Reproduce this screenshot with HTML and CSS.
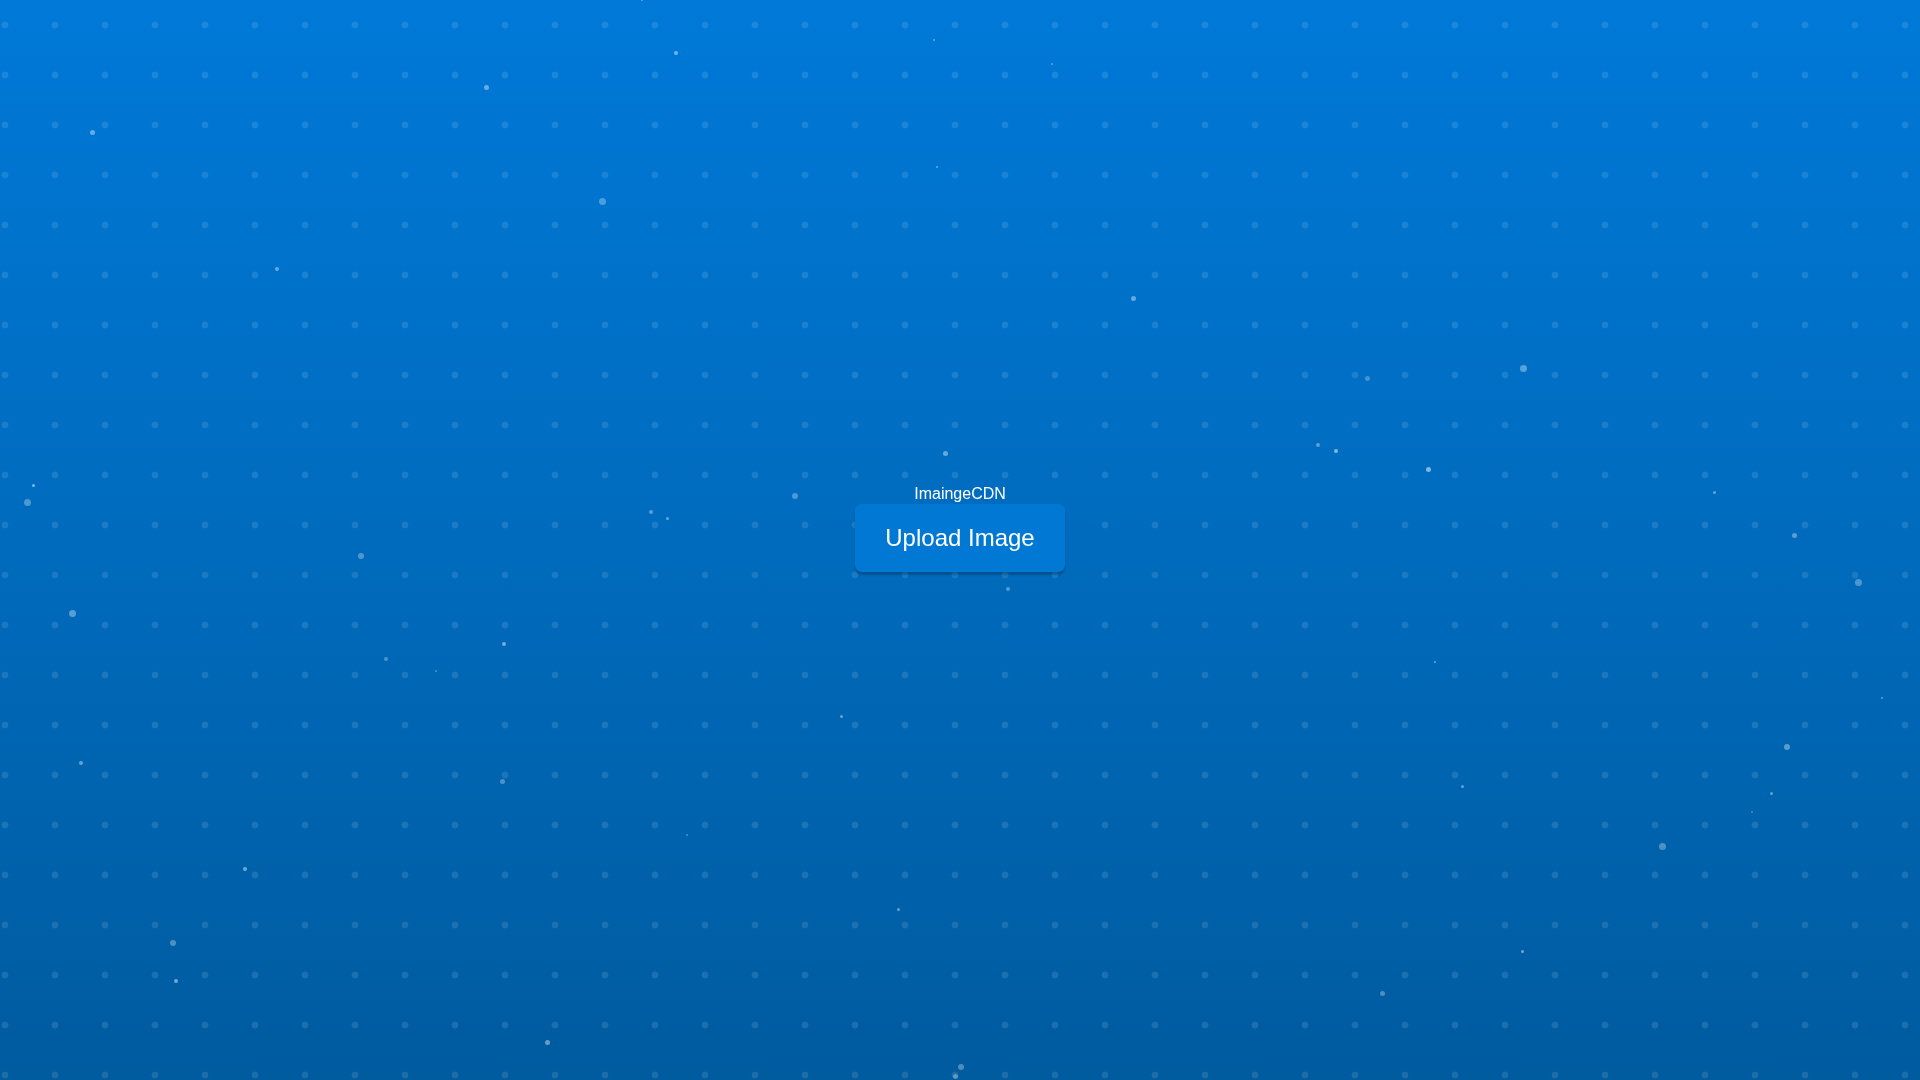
FILE: index.html
```html
<!DOCTYPE html>
<html lang="en">
<head>
<meta charset="utf-8">
<title>ImaingeCDN</title>
<link rel="stylesheet" href="styles.css">
</head>
<body>
<div class="particles">
  <span class="p" style="--x:642px;--y:0px;--s:2px;--o:.4"></span>
  <span class="p" style="--x:676px;--y:53px;--s:4px;--o:.45"></span>
  <span class="p" style="--x:934px;--y:40px;--s:2px;--o:.4"></span>
  <span class="p" style="--x:1052px;--y:64px;--s:2px;--o:.35"></span>
  <span class="p" style="--x:486px;--y:87px;--s:5px;--o:.4"></span>
  <span class="p" style="--x:92px;--y:132px;--s:5px;--o:.4"></span>
  <span class="p" style="--x:937px;--y:167px;--s:2px;--o:.4"></span>
  <span class="p" style="--x:602px;--y:201px;--s:7px;--o:.3"></span>
  <span class="p" style="--x:277px;--y:269px;--s:4px;--o:.4"></span>
  <span class="p" style="--x:1133px;--y:298px;--s:5px;--o:.4"></span>
  <span class="p" style="--x:1523px;--y:368px;--s:7px;--o:.35"></span>
  <span class="p" style="--x:1367px;--y:378px;--s:5px;--o:.25"></span>
  <span class="p" style="--x:945px;--y:453px;--s:5px;--o:.4"></span>
  <span class="p" style="--x:1318px;--y:445px;--s:4px;--o:.35"></span>
  <span class="p" style="--x:1336px;--y:451px;--s:4px;--o:.5"></span>
  <span class="p" style="--x:1428px;--y:469px;--s:5px;--o:.5"></span>
  <span class="p" style="--x:33px;--y:485px;--s:3px;--o:.5"></span>
  <span class="p" style="--x:27px;--y:502px;--s:7px;--o:.3"></span>
  <span class="p" style="--x:795px;--y:496px;--s:6px;--o:.3"></span>
  <span class="p" style="--x:1714px;--y:492px;--s:3px;--o:.4"></span>
  <span class="p" style="--x:651px;--y:512px;--s:4px;--o:.35"></span>
  <span class="p" style="--x:667px;--y:518px;--s:3px;--o:.4"></span>
  <span class="p" style="--x:1794px;--y:535px;--s:5px;--o:.35"></span>
  <span class="p" style="--x:361px;--y:556px;--s:6px;--o:.3"></span>
  <span class="p" style="--x:1858px;--y:582px;--s:7px;--o:.3"></span>
  <span class="p" style="--x:1008px;--y:589px;--s:4px;--o:.35"></span>
  <span class="p" style="--x:72px;--y:613px;--s:7px;--o:.35"></span>
  <span class="p" style="--x:504px;--y:644px;--s:4px;--o:.45"></span>
  <span class="p" style="--x:1435px;--y:662px;--s:2px;--o:.4"></span>
  <span class="p" style="--x:386px;--y:659px;--s:4px;--o:.3"></span>
  <span class="p" style="--x:436px;--y:671px;--s:2px;--o:.3"></span>
  <span class="p" style="--x:1882px;--y:698px;--s:2px;--o:.4"></span>
  <span class="p" style="--x:841px;--y:716px;--s:3px;--o:.4"></span>
  <span class="p" style="--x:1787px;--y:747px;--s:6px;--o:.35"></span>
  <span class="p" style="--x:81px;--y:763px;--s:4px;--o:.4"></span>
  <span class="p" style="--x:502px;--y:781px;--s:5px;--o:.3"></span>
  <span class="p" style="--x:1462px;--y:786px;--s:3px;--o:.4"></span>
  <span class="p" style="--x:1771px;--y:793px;--s:3px;--o:.4"></span>
  <span class="p" style="--x:1752px;--y:812px;--s:2px;--o:.3"></span>
  <span class="p" style="--x:687px;--y:835px;--s:2px;--o:.3"></span>
  <span class="p" style="--x:1662px;--y:846px;--s:7px;--o:.3"></span>
  <span class="p" style="--x:245px;--y:869px;--s:4px;--o:.45"></span>
  <span class="p" style="--x:898px;--y:909px;--s:3px;--o:.4"></span>
  <span class="p" style="--x:173px;--y:943px;--s:6px;--o:.3"></span>
  <span class="p" style="--x:1522px;--y:951px;--s:3px;--o:.45"></span>
  <span class="p" style="--x:176px;--y:981px;--s:4px;--o:.45"></span>
  <span class="p" style="--x:1382px;--y:993px;--s:5px;--o:.3"></span>
  <span class="p" style="--x:547px;--y:1042px;--s:5px;--o:.4"></span>
  <span class="p" style="--x:961px;--y:1067px;--s:6px;--o:.3"></span>
  <span class="p" style="--x:955px;--y:1076px;--s:5px;--o:.3"></span>
</div>
<main class="stage">
  <div class="uploader">
    <div class="brand">ImaingeCDN</div>
    <button class="upload-btn" type="button">Upload Image</button>
  </div>
</main>
</body>
</html>
```

FILE: styles.css
```css
html, body {
  margin: 0;
  padding: 0;
  height: 100%;
}

body {
  font-family: "Liberation Sans", Arial, sans-serif;
  color: #ffffff;
  overflow: hidden;
  background-color: #006ab8;
  background-image:
    radial-gradient(circle at 25px 25px, rgba(255, 255, 255, 0.11) 0, rgba(255, 255, 255, 0.11) 3px, rgba(255, 255, 255, 0) 3.8px),
    linear-gradient(180deg, #0079d8 0%, #006bbd 50%, #005b9f 100%);
  background-size: 50px 50px, 100% 100%;
  background-position: -20px 0, 0 0;
  background-repeat: repeat, no-repeat;
}

.particles {
  position: fixed;
  inset: 0;
  pointer-events: none;
}

.p {
  position: absolute;
  left: var(--x);
  top: var(--y);
  width: var(--s);
  height: var(--s);
  margin-left: calc(var(--s) / -2);
  margin-top: calc(var(--s) / -2);
  border-radius: 50%;
  background: #ffffff;
  opacity: var(--o);
}

.stage {
  position: relative;
  height: 100vh;
  display: flex;
  align-items: center;
  justify-content: center;
}

.uploader {
  display: flex;
  flex-direction: column;
  align-items: center;
  padding-bottom: 23px;
}

.brand {
  font-size: 16px;
  line-height: 18px;
  color: #ffffff;
}

.upload-btn {
  margin-top: 1px;
  font-family: "Liberation Sans", Arial, sans-serif;
  font-size: 24px;
  line-height: 28px;
  color: #ffffff;
  background: #0078d4;
  border: none;
  border-radius: 7px;
  padding: 20px 30px;
  box-shadow: 0 3px 2px rgba(0, 0, 0, 0.22);
  cursor: pointer;
}
```
